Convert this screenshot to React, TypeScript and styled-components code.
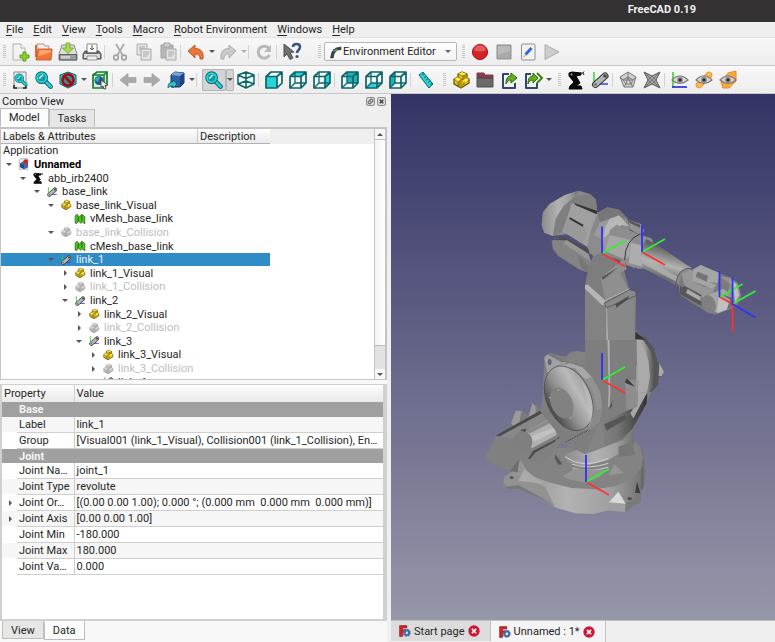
import React, { useState } from "react";
import styled, { createGlobalStyle, css } from "styled-components";

const GlobalStyle = createGlobalStyle`
  *, *::before, *::after { box-sizing: border-box; }
  html, body { margin: 0; padding: 0; }
  body, button, select {
    font-family: Roboto, "Noto Sans", sans-serif;
    font-size: 11px;
    line-height: 13px;
    color: #262626;
  }
  button { background: none; border: 0; padding: 0; margin: 0; }
  svg { display: block; }
`;

/* ---------- frame ---------- */

const Window = styled.div`
  display: flex;
  flex-direction: column;
  height: 100vh;
  min-height: 480px;
  overflow: hidden;
  background: #efefef;
`;

const TitleBar = styled.header`
  display: flex;
  align-items: center;
  justify-content: flex-end;
  height: 22px;
  flex: none;
  padding: 0 79px 3px 0;
  background: #333132;
  color: #f2f2f2;
  font-weight: 700;
`;

const MenuBar = styled.nav`
  display: flex;
  align-items: center;
  height: 16px;
  flex: none;
  gap: 10px;
  padding: 0 6px;
  border-bottom: 1px solid #e2e2e2;
`;

const MenuItem = styled.button`
  white-space: nowrap;
  u { text-underline-offset: 2px; }
`;

/* ---------- toolbars ---------- */

const Toolbar = styled.div`
  display: flex;
  align-items: center;
  height: 28px;
  flex: none;
  background: linear-gradient(#f8f8f8, #ededed);
  border-bottom: 1px solid #c9c9c9;
`;

const Grip = styled.span<{ $first?: boolean }>`
  display: flex;
  justify-content: center;
  width: ${(p) => (p.$first ? 8 : 11)}px;
  flex: none;
  &::before {
    content: "";
    width: 4px;
    height: 13px;
    background: repeating-linear-gradient(#c6c6c6 0 1px, transparent 1px 2px);
    border-left: 1px solid transparent;
    background-clip: padding-box;
  }
`;

const Separator = styled.span`
  width: 4px;
  height: 14px;
  flex: none;
  border-left: 1px solid #d2d2d2;
`;

const Spacer = styled.span`
  width: 9px;
  flex: none;
`;

const ToolButton = styled.button<{ $pressed?: boolean }>`
  display: flex;
  align-items: center;
  justify-content: center;
  width: 24px;
  height: 24px;
  flex: none;
  border-radius: 2px;
  ${(p) =>
    p.$pressed &&
    css`
      margin-left: 2px;
      height: 22px;
      background: #d4d4d4;
      box-shadow: inset 0 0 0 1px #b4b4b4;
    `}
`;

const DropButton = styled.button<{ $pressed?: boolean; $dim?: boolean }>`
  display: flex;
  align-items: center;
  justify-content: center;
  width: 8px;
  height: 22px;
  flex: none;
  border-radius: 2px;
  opacity: ${(p) => (p.$dim ? 0.4 : 1)};
  ${(p) =>
    p.$pressed &&
    css`
      background: #d4d4d4;
      box-shadow: inset 0 0 0 1px #b4b4b4;
    `}
  &::after {
    content: "";
    border: 3px solid transparent;
    border-top-color: #555;
    border-bottom: 0;
  }
`;

const Workbench = styled.label`
  display: flex;
  align-items: center;
  gap: 1px;
  width: 133px;
  height: 19px;
  flex: none;
  padding: 0 5px 0 3px;
  border: 1px solid #b5b5b5;
  border-radius: 2px;
  background: linear-gradient(#ffffff, #f3f3f3);
  &::after {
    content: "";
    border: 3px solid transparent;
    border-top-color: #666;
    border-bottom: 0;
  }
  select {
    flex: 1;
    min-width: 0;
    appearance: none;
    border: 0;
    padding: 0;
    background: none;
    outline: 0;
  }
`;

/* ---------- icons ---------- */

const Icon = ({ size = 20, children }: { size?: number; children: React.ReactNode }) => (
  <svg width={size} height={size} viewBox="0 0 20 20" aria-hidden="true">
    {children}
  </svg>
);

const TEAL = "#0f6468";
const CYAN = "#27d3d9";

const Magnifier = ({ small }: { small?: boolean }) => (
  <g transform={small ? "translate(4 3) scale(.7)" : "translate(.5 .5) scale(.95)"}>
    <path d="M11 11l6 6" stroke={TEAL} strokeWidth="4.800" strokeLinecap="round" />
    <path d="M11 11l6 6" stroke={CYAN} strokeWidth="2.800" strokeLinecap="round" />
    <circle cx="7.500" cy="7.500" r="4.800" fill="#19b4bb" stroke={TEAL} strokeWidth="3.800" />
    <circle cx="7.500" cy="7.500" r="4.800" fill="#13989f" stroke={CYAN} strokeWidth="1.900" />
    <path d="M5 8.500l4-4" stroke="#c9f7f8" strokeWidth="1.600" />
  </g>
);

const cubeFaces: Record<string, string> = {
  front: "2,6.5 13,6.5 13,18 2,18",
  top: "2,6.5 7,2 18,2 13,6.5",
  right: "13,6.5 18,2 18,13 13,18",
  rear: "7,2 18,2 18,13 7,13",
  bottom: "2,18 7,13 18,13 13,18",
  left: "2,6.5 7,2 7,13 2,18",
};

const CubeView = ({ face }: { face: string }) => (
  <Icon>
    <path d="M2 6.500L7 2h11v11l-5 5H2z" fill="#f1f8f8" />
    <polygon points={cubeFaces[face]} fill={face === "rear" || face === "left" ? "#1cb3b9" : CYAN} />
    {face !== "front" && <path d="M7 2v11M7 13h11M7 13l-5 5" stroke={TEAL} strokeWidth="1.300" fill="none" />}
    <path
      d="M2 6.500h11V18H2zM2 6.500L7 2h11l-5 4.500M18 2v11l-5 5"
      stroke={TEAL}
      strokeWidth="1.700"
      strokeLinejoin="round"
      fill="none"
    />
  </Icon>
);

const IsoCube = () => (
  <Icon>
    <path
      d="M10 2l8 3v9l-8 4-8-4V5zM2 5l8 3.500L18 5M10 8.500V18M10 2v9M2 14l8-3 8 3"
      fill="#e8f6f6"
      stroke={TEAL}
      strokeWidth="1.500"
      strokeLinejoin="round"
    />
  </Icon>
);

const ArrowIcon = ({ flip }: { flip?: boolean }) => (
  <Icon>
    <path
      d="M2 10l8-6.500v4h8v5h-8v4z"
      fill="#a9a9a9"
      stroke="#9a9a9a"
      strokeWidth=".6"
      transform={flip ? "rotate(180 10 10)" : undefined}
    />
  </Icon>
);

const CurvedArrow = ({ redo }: { redo?: boolean }) => (
  <Icon>
    <path
      d="M2 9l7-6v3.500c6 0 9 3.500 8 10.500h-3c0-4-2-5-5-5v4z"
      fill={redo ? "#c9c9c9" : "#e8773c"}
      stroke={redo ? "#a8a8a8" : "#b9501c"}
      strokeWidth=".9"
      strokeLinejoin="round"
      transform={redo ? "matrix(-1 0 0 1 20 0)" : undefined}
    />
  </Icon>
);

const PartIcon = ({ size = 20, dim }: { size?: number; dim?: boolean }) => {
  const [light, mid, dark, line] = dim
    ? ["#dcdcdc", "#c2c2c2", "#a9a9a9", "#9b9b9b"]
    : ["#ffe94d", "#dfc022", "#a88a0b", "#5f4d06"];
  return (
    <Icon size={size}>
      <path d="M3 9l4-2V4l4-2 5 2v4l2 1v4l-8 5-7-4z" fill={mid} stroke={line} strokeWidth="1.200" strokeLinejoin="round" />
      <path d="M3 9l4-2 4 2-4 3zM7 4l4-2 5 2-4 2zM12 10l3-2 3 1-4 3z" fill={light} />
      <path d="M7 12l4-3v5l3-2v3l-4 3-3-2zM12 6l4-2v4l-4 2z" fill={dark} opacity=".75" />
      <path d="M3 9l4 3 4-3M7 12v5M7 4l5 2v4l-5-3M12 6l4-2" fill="none" stroke={line} strokeWidth=".6" />
    </Icon>
  );
};

const RobotIcon = ({ size = 20 }: { size?: number }) => (
  <Icon size={size}>
    <path d="M3 3l3-1 9 1v2l-5 1 4 7-4 3h5l1 3H3l1-3 4-4-5-6z" fill="#080808" stroke="#000" strokeLinejoin="round" />
    <path d="M14 3h3l1-1.500M17 3l1 2" stroke="#222" fill="none" />
    <circle cx="5.500" cy="4.500" r="1" fill="#aaa" />
  </Icon>
);

const LinkIcon = ({ size = 20 }: { size?: number }) => (
  <Icon size={size}>
    <path d="M4 2v12" stroke="#35d72f" strokeWidth="1.500" />
    <path d="M4 14h14" stroke="#4040e8" strokeWidth="1.500" />
    <path d="M5.500 14.500L15 6" stroke="#333" strokeWidth="7" strokeLinecap="round" />
    <path d="M5.500 14.500L15 6" stroke="#b5b5b5" strokeWidth="5" strokeLinecap="round" />
    <circle cx="5.500" cy="14.500" r="1.300" fill="#666" />
    <circle cx="15" cy="6" r="1.700" fill="#444" />
  </Icon>
);

const MeshIcon = () => (
  <Icon size={12}>
    <path
      d="M2 5l3-3 4 5 4-5 5 4v12l-4-3-3 2-4-4-2 4H2z"
      fill="#55c422"
      stroke="#236b08"
      strokeWidth="1.300"
      strokeLinejoin="round"
    />
    <path d="M7 6v8M13 4v9" stroke="#1c5a07" strokeWidth="1.600" />
  </Icon>
);

const DocumentIcon = () => (
  <Icon size={12}>
    <path d="M4 1h12v18H2V4z" fill="#e7e7e7" stroke="#a5a5a5" />
    <path d="M4 9l6-3 6 3v6l-6 3-6-3z" fill="#3c6cab" stroke="#1d3c69" />
    <path d="M4 9l6 3v6l-6-3z" fill="#264a7c" />
    <circle cx="13" cy="6" r="4" fill="#d81f28" />
  </Icon>
);

const AppIcon = () => (
  <Icon size={12}>
    <path d="M1 1h12v4H6v3h5v4H6v7H1z" fill="#d2232a" stroke="#89141a" />
    <circle cx="13" cy="13" r="4" fill="none" stroke="#466ca5" strokeWidth="3.500" />
    <circle cx="13" cy="13" r="5.600" fill="none" stroke="#466ca5" strokeWidth="2" strokeDasharray="2.200 2.200" />
  </Icon>
);

const EyeShape = () => (
  <>
    <path d="M2 10q8-8 16 0q-8 7-16 0z" fill="#d9d9d9" fillOpacity=".85" stroke="#777" strokeWidth="1.100" />
    <circle cx="10" cy="10" r="3" fill="#8e8e8e" />
    <circle cx="10" cy="10" r="1.400" fill="#222" />
  </>
);

const CloseBadge = () => (
  <Icon size={12}>
    <circle cx="10" cy="10" r="9.500" fill="#cb1836" />
    <path d="M6.500 6.500l7 7M13.500 6.500l-7 7" stroke="#fff" strokeWidth="2.600" />
  </Icon>
);

const icons = {
  new: (
    <Icon>
      <path d="M3 2h8l4 4v12H3z" fill="#f1f1ee" stroke="#b4b4b0" />
      <path d="M11 2v4h4" fill="#fff" stroke="#b4b4b0" />
      <path d="M13 10h3v3h3v3h-3v3h-3v-3h-3v-3h3z" fill="#8cd41d" stroke="#508b0b" strokeWidth=".8" />
    </Icon>
  ),
  open: (
    <Icon>
      <path d="M3 2h7l1 2h4v9H3z" fill="#ededed" stroke="#b69384" />
      <path d="M1 3h2v12H1z" fill="#de6938" />
      <path d="M4 7h14v1l-1 10H2z" fill="#ee7437" stroke="#c65220" strokeWidth=".8" />
      <path d="M5 8h12l-.4 3C11 11 9 14 4 14z" fill="#ffa26c" />
    </Icon>
  ),
  save: (
    <Icon>
      <path d="M4 3h12l3 9v6H1v-6z" fill="#dededc" stroke="#8b8b8b" />
      <path d="M1.500 12.500h17V18h-17z" fill="#9c9e9c" stroke="#616161" />
      <path d="M3 14h9v2.500H3z" fill="#d0d0d0" />
      <path d="M8 1h4v5h3.500L10 11.500 4.500 6H8z" fill="#a5dc48" stroke="#6ea324" strokeWidth=".8" />
    </Icon>
  ),
  print: (
    <Icon>
      <path d="M5 2h10v9H5z" fill="#fafafa" stroke="#888" />
      <path d="M10 3v5M8 6l2 2 2-2" stroke="#555" fill="none" />
      <path d="M3 9h2v2h10V9h2l2 3v5H1v-5z" fill="#767676" stroke="#505050" />
      <path d="M2 12h16v4H2z" fill="#dcdcdc" />
      <path d="M5 14h10v4H5z" fill="#efefef" stroke="#777" strokeWidth=".7" />
    </Icon>
  ),
  cut: (
    <Icon>
      <path d="M6 2l7 12M14 2L7 14" stroke="#b0b0b0" strokeWidth="2" />
      <circle cx="6" cy="15.500" r="2.300" fill="none" stroke="#a4a4a4" strokeWidth="1.700" />
      <circle cx="14" cy="15.500" r="2.300" fill="none" stroke="#a4a4a4" strokeWidth="1.700" />
    </Icon>
  ),
  copy: (
    <Icon>
      <path d="M3 2h10v11H3z" fill="#e3e3e3" stroke="#b0b0b0" />
      <path d="M5 5h6M5 7h6" stroke="#aaa" />
      <path d="M7 7h10v11H7z" fill="#e3e3e3" stroke="#a9a9a9" />
      <path d="M9 10h6M9 12h6M9 14h4" stroke="#aaa" />
    </Icon>
  ),
  paste: (
    <Icon>
      <path d="M3 3h12v13H3z" fill="#b7b7b7" stroke="#a0a0a0" />
      <path d="M6 1h6v4H6z" fill="#cecece" stroke="#a4a4a4" />
      <path d="M8 7h10v11H8z" fill="#e1e1e1" stroke="#aaa" />
      <path d="M10 10h6M10 12h6M10 14h4" stroke="#aaa" />
    </Icon>
  ),
  undo: <CurvedArrow />,
  redo: <CurvedArrow redo />,
  refresh: (
    <Icon>
      <path d="M15 6.500A6 6 0 1 0 15.500 13" stroke="#b8b8b8" strokeWidth="3" fill="none" />
      <path d="M17 3v7h-7z" fill="#b8b8b8" />
    </Icon>
  ),
  whatsThis: (
    <Icon>
      <path d="M2 2l10 8-4 .5 3 5.500-3 1.500-3-5.500-3 3z" fill="#6d716f" stroke="#4d504f" />
      <path d="M11 5c0-4 7-4 7 0 0 3-3 3-3 6" fill="none" stroke="#35557f" strokeWidth="2.500" />
      <circle cx="15" cy="14.500" r="1.600" fill="#35557f" />
    </Icon>
  ),
  record: (
    <Icon>
      <circle cx="10" cy="10" r="7.600" fill="#d3232a" stroke="#a8181e" />
      <path d="M4 8a6.200 6.200 0 0 1 12 0q-6 3-12 0z" fill="#ea6d68" opacity=".8" />
    </Icon>
  ),
  stop: (
    <Icon>
      <path d="M3 3h14v14H3z" fill="#a9a9a9" stroke="#8d8d8d" />
      <path d="M4 4h12v5L4 13z" fill="#bababa" />
    </Icon>
  ),
  edit: (
    <Icon>
      <rect x="3.500" y="2" width="13.500" height="16" rx="1" fill="#f2f2f2" stroke="#8e8e8e" />
      <path d="M7.500 12.500l6-6.500" stroke="#3268de" strokeWidth="3" />
      <path d="M5.500 15l2-2" stroke="#e9b063" strokeWidth="1.600" />
    </Icon>
  ),
  play: (
    <Icon>
      <path d="M3 2.500l14 7.500-14 7.500z" fill="#cdcdcd" stroke="#a1a1a1" strokeWidth=".8" />
    </Icon>
  ),
  fitAll: (
    <Icon>
      <path d="M4 2h12v16H4z" fill="#f1f1f1" stroke="#888" />
      <path d="M4 15v3h3M16 15v3h-3" stroke="#222" strokeWidth="1.500" fill="none" />
      <Magnifier small />
    </Icon>
  ),
  fitSelection: (
    <Icon>
      <Magnifier />
    </Icon>
  ),
  drawStyle: (
    <Icon>
      <path d="M10 2l8 3v9l-8 4-8-4V5z" fill={CYAN} stroke={TEAL} />
      <circle cx="10" cy="10" r="5.600" fill="#3a8f93" stroke="#a10e12" strokeWidth="2.600" />
      <path d="M6 6l8 8" stroke="#a10e12" strokeWidth="2.600" />
    </Icon>
  ),
  bounding: (
    <Icon>
      <path d="M3 5l4-3h10v12l-3 4H3z" fill="#d5ead7" stroke="#15802a" strokeWidth="1.700" />
      <path d="M3 5h11v13M14 5l3-3" stroke="#15802a" strokeWidth="1.500" fill="none" />
      <circle cx="9" cy="10.500" r="4.500" fill="#2c5796" />
      <path d="M5 10a4 4 0 0 1 5-3l-2 5z" fill="#2fb3b6" />
      <path d="M11 10l7 5-3 .5 1 3-2 .5-1-3-2 1z" fill="#eee" stroke="#333" strokeWidth=".8" />
    </Icon>
  ),
  back: <ArrowIcon />,
  forward: <ArrowIcon flip />,
  linked: (
    <Icon>
      <path d="M5 5l4-3 9 1v10l-4 4H5z" fill="#2f5fa4" stroke="#173562" />
      <path d="M5 5l4-3 9 1-4 3z" fill="#7ba4d9" />
      <path d="M14 6l4-3v10l-4 4z" fill="#1f4680" />
      <path d="M2 18c0-4 1-6 5-6v-2l4 4-4 4v-2c-2 0-3 0-5 2z" fill="#35bec4" stroke={TEAL} strokeWidth=".8" />
    </Icon>
  ),
  ruler: (
    <Icon>
      <path d="M3 5l4-3 10 12-4 4z" fill={CYAN} stroke={TEAL} />
      <path d="M8 4l-2 1M10 6.500L8 8M12 9l-2 1M14 11l-2 1.500M16 13.500l-2 1" stroke={TEAL} />
    </Icon>
  ),
  group: (
    <Icon>
      <path d="M2 3h7l1 2h8v12H2z" fill="#6b6b6b" stroke="#505050" />
      <path d="M2 3h7l1 2h8v3H2z" fill="#8d3b4a" />
      <path d="M2 8h16" stroke="#504045" />
    </Icon>
  ),
  exportOne: (
    <Icon>
      <path d="M10 4H4v14h12v-5" fill="none" stroke="#2e4a68" strokeWidth="2" strokeLinejoin="round" />
      <path d="M7 14c0-6 2-8 5-8V3l6 5-6 5v-3c-2 0-4 1-5 4z" fill="#63b222" stroke="#2e6a08" />
    </Icon>
  ),
  exportMany: (
    <Icon>
      <path d="M8 4H3v14h11v-5" fill="none" stroke="#2e4a68" strokeWidth="2" strokeLinejoin="round" />
      <path d="M14 3l5 5-5 5" fill="none" stroke="#3e8211" strokeWidth="2" />
      <path d="M5 14c0-6 2-8 5-8V3l5 5-5 5v-3c-2 0-4 1-5 4z" fill="#63b222" stroke="#2e6a08" />
    </Icon>
  ),
  pentagon: (
    <Icon>
      <path
        d="M10 2l8 5-3 10H6L2 7zM10 2v5l5 3-2 4H8l-3-4 5-3M2 7l3 3M18 7l-3 3M6 17l2-3M15 17l-2-3M10 7l3 7M10 7L8 14M5 10h10"
        fill="#cfcfcf"
        stroke="#7c7c7c"
        strokeLinejoin="round"
      />
    </Icon>
  ),
  star: (
    <Icon>
      <path d="M2 2l8 4 8-4-4 8 4 8-8-4-8 4 4-8z" fill="#a8a8a8" stroke="#555" strokeLinejoin="round" />
      <path d="M2 2l16 16M18 2L2 18M10 6l4 4-4 4-4-4z" fill="none" stroke="#666" strokeWidth=".8" />
    </Icon>
  ),
  eyeAxes: (
    <Icon>
      <path d="M3 2v15" stroke="#35d72f" strokeWidth="1.600" />
      <path d="M2 17h15" stroke="#2222e0" strokeWidth="1.600" />
      <EyeShape />
    </Icon>
  ),
  eyeLink: (
    <Icon>
      <path d="M5 15L15 5" stroke="#d98a24" strokeWidth="6.500" strokeLinecap="round" />
      <path d="M5 15L15 5" stroke="#ffb84e" strokeWidth="5" strokeLinecap="round" />
      <EyeShape />
    </Icon>
  ),
  eyeFace: (
    <Icon>
      <path d="M18 1v10l-7 7H5l-2-6 7-9z" fill="#fba83c" stroke="#de8d27" />
      <EyeShape />
    </Icon>
  ),
};

type IconName = keyof typeof icons;
const Tool = ({ name, label }: { name: IconName; label: string }) => (
  <ToolButton aria-label={label} title={label}>
    {icons[name]}
  </ToolButton>
);

/* ---------- combo view ---------- */

const Main = styled.main`
  display: flex;
  flex: 1;
  min-height: 0;
`;

const Dock = styled.section`
  display: flex;
  flex-direction: column;
  flex: 0 0 387px;
  min-height: 0;
`;

const DockTitle = styled.div`
  display: flex;
  align-items: center;
  gap: 2px;
  height: 14px;
  flex: none;
  padding: 0 1px 0 2px;
  span { flex: 1; }
`;

const TabRow = styled.div<{ $below?: boolean }>`
  display: flex;
  align-items: flex-end;
  flex: none;
  height: ${(p) => (p.$below ? 21 : 19)}px;
  padding-left: ${(p) => (p.$below ? 2 : 0)}px;
  ${(p) => p.$below && "align-items: flex-start; background: #f8f8f8;"}
`;

const Tab = styled.button<{ $active: boolean; $below?: boolean }>`
  height: ${(p) => (p.$active ? 19 : 18)}px;
  padding: 0 8px;
  border: 1px solid #bdbdbd;
  border-top-color: ${(p) => (p.$below ? "transparent" : "#bdbdbd")};
  border-bottom-color: ${(p) => (p.$below ? "#bdbdbd" : "transparent")};
  background: ${(p) => (p.$active ? "#fcfcfc" : "#e6e6e6")};
`;

const TreeFrame = styled.div`
  display: flex;
  flex: 0 0 253px;
  min-height: 0;
  border: 1px solid #c4c4c4;
  border-top-width: 2px;
  border-right-width: 2px;
  background: #fff;
`;

const TreeContent = styled.div`
  flex: 1;
  min-width: 0;
  overflow: hidden;
`;

const TreeHeader = styled.div`
  display: flex;
  height: 15px;
  background: #efefef;
  span {
    padding: 1px 0 0 2px;
    background: linear-gradient(#fdfdfd, #eaeaea);
    border-bottom: 1px solid #b2b2b2;
  }
  span:first-child { width: 196px; }
  span:last-child { width: 73px; border-left: 1px solid #c8c8c8; }
`;

const TreeList = styled.ul`
  display: grid;
  grid-auto-rows: 1fr;
  height: 245px;
  width: 269px;
  margin: 0;
  padding: 0;
  list-style: none;
`;

const TreeItem = styled.li<{ $level: number; $selected?: boolean; $muted?: boolean; $strong?: boolean }>`
  display: flex;
  align-items: center;
  min-height: 0;
  padding-left: ${(p) => (p.$level < 0 ? 2 : 2 + p.$level * 14)}px;
  white-space: nowrap;
  font-weight: ${(p) => (p.$strong ? 700 : 400)};
  color: ${(p) => (p.$selected ? "#e8f3fb" : p.$muted ? "#bdbdbd" : p.$strong ? "#000" : "#262626")};
  background: ${(p) => (p.$selected ? "#308cc6" : "transparent")};
  svg { margin: 0 4px 0 3px; flex: none; }
`;

const Toggle = styled.button<{ $state: "open" | "closed" | "none" }>`
  display: flex;
  align-items: center;
  justify-content: center;
  width: 12px;
  height: 10px;
  flex: none;
  visibility: ${(p) => (p.$state === "none" ? "hidden" : "visible")};
  &::after {
    content: "";
    border: 3px solid transparent;
    ${(p) =>
      p.$state === "open"
        ? "border-top-color: #555; border-bottom: 0;"
        : "border-left-color: #555; border-right: 0;"}
  }
`;

const ScrollBar = styled.div`
  display: flex;
  flex-direction: column;
  width: 11px;
  flex: none;
  border-left: 1px solid #c4c4c4;
  background: #e2e2e2;
`;

const ScrollButton = styled.button<{ $up?: boolean }>`
  display: flex;
  align-items: center;
  justify-content: center;
  height: 10px;
  background: #f7f7f7;
  &::after {
    content: "";
    border: 3px solid transparent;
    ${(p) =>
      p.$up ? "border-bottom-color: #555; border-top: 0;" : "border-top-color: #555; border-bottom: 0;"}
  }
`;

const ScrollTrack = styled.div`
  flex: 1;
  div {
    height: 90%;
    border: solid #bcbcbc;
    border-width: 1px 0;
    background: linear-gradient(90deg, #f3f3f3, #fff);
  }
`;

const Splitter = styled.div`
  height: 4px;
  flex: none;
  background: #f8f8f8;
`;

const PropertyFrame = styled.div`
  flex: 1;
  min-height: 0;
  overflow: hidden;
  border: solid #d0d0d0;
  border-width: 1px 4px 2px 2px;
  background: #fff;
`;

const PropertyTable = styled.table`
  width: 100%;
  height: 190px;
  table-layout: fixed;
  border-collapse: collapse;
  col:nth-child(1) { width: 15px; }
  col:nth-child(2) { width: 57px; }
  thead tr { height: 17px; }
  thead { background: linear-gradient(#fdfdfd, #e9e9e9); }
  th, td {
    padding: 0 2px;
    text-align: left;
    white-space: nowrap;
    overflow: hidden;
    text-overflow: ellipsis;
    font-weight: 400;
  }
  tbody td { border-bottom: 1px solid #cfcfcf; }
  tbody td:first-child { border-bottom-color: transparent; padding: 0 2px; }
  td:last-child, th:last-child { border-left: 1px solid #cfcfcf; }
`;

const PropertyRow = styled.tr<{ $shaded?: boolean }>`
  background: ${(p) => (p.$shaded ? "#f6f6f6" : "#fff")};
`;

const CategoryRow = styled.tr`
  background: #a0a0a0;
  th {
    padding-left: 17px;
    color: #f4f4f4;
    font-weight: 700;
  }
  && th:last-child { border-left: 0; }
`;

const DockHandle = styled.div`
  width: 4px;
  flex: none;
  background: #efefef;
`;

/* ---------- document area ---------- */

const Documents = styled.section`
  display: flex;
  flex-direction: column;
  flex: 1;
  min-width: 0;
`;

const Viewport = styled.div`
  flex: 1;
  min-height: 0;
  background: linear-gradient(#333366, #9797aa);
  svg { width: 100%; height: 100%; }
`;

const DocTabs = styled.div`
  display: flex;
  height: 22px;
  flex: none;
  border-top: 1px solid #c2c2c2;
`;

const DocTab = styled.div<{ $active?: boolean }>`
  display: flex;
  align-items: center;
  height: ${(p) => (p.$active ? 21 : 20)}px;
  padding: 0 10px 0 8px;
  gap: 3px;
  background: ${(p) => (p.$active ? "#f4f4f4" : "#dcdcdc")};
  border-right: 1px solid #c2c2c2;
  button { white-space: nowrap; }
`;

/* ---------- 3D scene ---------- */

const Axes = ({ x, y }: { x: number; y: number }) => (
  <g strokeWidth="1.800" fill="none">
    <path d={`M${x} ${y}l23 13`} stroke="#ff3030" />
    <path d={`M${x} ${y}l23 -13`} stroke="#30f030" />
    <path d={`M${x} ${y}v-27`} stroke="#3030ff" />
  </g>
);

const Scene = () => (
  <svg viewBox="391 94 384 526" role="img" aria-label="ABB IRB 2400 robot model">
    <defs>
      <linearGradient id="drum">
        <stop offset="0" stopColor="#8a8a8a" />
        <stop offset=".45" stopColor="#b2b2b2" />
        <stop offset=".75" stopColor="#a0a0a0" />
        <stop offset="1" stopColor="#707070" />
      </linearGradient>
      <linearGradient id="disk" x1="0" y1=".4" x2="1" y2=".2">
        <stop offset="0" stopColor="#4d4d4d" />
        <stop offset=".35" stopColor="#909090" />
        <stop offset=".7" stopColor="#bababa" />
        <stop offset="1" stopColor="#9c9c9c" />
      </linearGradient>
      <linearGradient id="rearDisk" x1="0" y1="0" x2="1" y2="0">
        <stop offset="0" stopColor="#bcbcbc" />
        <stop offset=".5" stopColor="#989898" />
        <stop offset="1" stopColor="#4f4f4f" />
      </linearGradient>
      <linearGradient id="tube" x1=".65" y1="0" x2=".35" y2="1">
        <stop offset=".15" stopColor="#555" />
        <stop offset=".36" stopColor="#858585" />
        <stop offset=".55" stopColor="#b4b4b4" />
        <stop offset=".8" stopColor="#6f6f6f" />
      </linearGradient>
      <linearGradient id="skirt">
        <stop offset="0" stopColor="#8b8b8b" />
        <stop offset=".5" stopColor="#777" />
        <stop offset="1" stopColor="#333" />
      </linearGradient>
    </defs>

    {/* base, turntable and balancing disks */}
    <g transform="translate(475 330) scale(.33333)">
      <path d="M483 12L510 22 537 55 549 100 567 125 560 138 551 140 549 165 527 188 505 192 483 190Z" fill="#555" />
      <path d="M483 14L500 24 528 65 540 120 534 170 522 188 480 200Z" fill="url(#rearDisk)" />
      <path d="M483 20L505 50 520 90 525 140 516 185 483 200Z" fill="#aaa" />
      <path d="M553 100L567 125 560 138 551 138Z" fill="#a8a8a8" />

      <path d="M130 382L500 355 510 400 508 468 497 480 497 515 450 546 400 541 355 552 300 550 240 532 200 507 130 477 95 476 85 465 88 440 112 427Z" fill="url(#drum)" />
      <path d="M88 440L112 425 130 436 210 470 240 532 200 507 130 465 95 470 86 460Z" fill="#929292" />
      <path d="M86 460L94 470 130 465 200 503 240 530 200 507 130 477 95 476Z" fill="#777" />
      <path d="M130 382L175 360 300 350 470 325 495 350 504 380 498 415 470 447 420 469 360 478 290 474 220 457 165 435Z" fill="#838383" />
      <path d="M148 417L205 462 130 452Z" fill="#aaa" />
      <ellipse cx="110" cy="443" rx="6" ry="4" fill="#555" />
      <path d="M430 485L452 521 450 546 400 541 405 517Z" fill="#a0a0a0" />
      <path d="M430 485L452 521 402 517Z" fill="#dadada" />
      <path d="M486 455L496 490 480 488Z" fill="#3e3e3e" />
      <path d="M453 520L497 498 497 515 450 546Z" fill="#7a7a7a" />
      <ellipse cx="464" cy="506" rx="6" ry="4" fill="#444" />
      <path d="M500 410L504 412 503 475 497 482Z" fill="#646464" />

      <path d="M108 280L122 243 140 242 160 261 172 220 195 240 196 265 130 310Z" fill="#9a9a9a" />
      <path d="M140 242L160 261 155 280 130 290ZM182 222L196 238 196 260 182 258Z" fill="#7b7b7b" />
      <path d="M30 385L62 317 195 242 240 250 270 330 200 400 130 385 128 426 105 423 34 394Z" fill="#808080" />
      <path d="M62 317L195 242 203 249 78 318Z" fill="#4a4a4a" />
      <path d="M76 318L205 248 230 265 130 330Z" fill="#888" />
      <path d="M130 330L134 383 128 426 105 423 134 384Z" fill="#6e6e6e" />
      <path d="M143 307L230 265 245 280 245 315 170 355Z" fill="#b1b1b1" />
      <path d="M143 307L230 266 236 274 165 310Z" fill="#8a8a8a" />
      <path d="M166 320L240 290 244 302 172 337Z" fill="#c1c1c1" />
      <ellipse cx="143" cy="335" rx="29" ry="31" fill="#7f7f7f" />
      <path d="M160 385L175 362 243 328 240 335 182 367 164 388Z" fill="#4c4c4c" />
      <path d="M135 300L155 296 150 306ZM205 252L225 249 230 257 210 256ZM243 330L267 300 260 320Z" fill="#494949" />

      <path d="M265 375L475 298 477 342 445 362 400 390 330 407 280 397Z" fill="url(#drum)" />
      <path d="M270 380Q325 420 400 385M290 402Q340 420 400 400M293 414Q345 428 400 412" fill="none" stroke="#d0d0d0" strokeWidth="3" />
      <path d="M265 437L300 415 390 420 375 440 330 458 280 448Z" fill="#949494" />
      <path d="M418 402L445 428 400 437Z" fill="#959595" />
      <path d="M430 350L470 335 480 375 432 380Z" fill="#777" />
      <path d="M240 372L262 403 250 404 240 385Z" fill="#575757" />

      <path d="M197 245L204 180 208 80 232 72 272 80 290 64 330 66 331 0 484 0 488 190 530 185 517 215 468 268 475 300 445 330 390 350 330 372 262 340 240 300Z" fill="#7e7e7e" />
      <path d="M378 275L475 235 517 190 515 220 472 297 440 328 390 345 330 372Z" fill="url(#skirt)" />
      <path d="M488 190L517 187 475 265 466 250 487 215Z" fill="#a7a7a7" />
      <path d="M450 158L478 147 490 150 487 232 455 240Z" fill="#8e8e8e" />
      <path d="M455 145L480 170 450 158Z" fill="#3d3d3d" />
      <path d="M387 283L450 255 454 266 395 302Z" fill="#565656" />
      <path d="M378 270L330 372 365 360 390 345Z" fill="#848484" />
      <path d="M270 337L350 295" stroke="#303030" strokeWidth="2" strokeDasharray="5 3" />
      <path d="M397 0h6l3 190-3 42-4-2 2-40z" fill="#b0b0b0" />
      <path d="M402 238L412 212 410 230Z" fill="#484848" />
      <path d="M484 0v105l5 3-1 70-4 8z" fill="#a2a2a2" />
      <path d="M275 82L286 69 310 63 330 70 330 105 285 95Z" fill="#828282" />

      <path d="M208 83L217 73 230 70 275 95 265 105 235 115 218 135Z" fill="#a0a0a0" />
      <path d="M217 73L230 70 276 95 260 97Z" fill="#777" />
      <ellipse cx="224" cy="96" rx="8" ry="11" fill="#62627e" stroke="#aaa" strokeWidth="3" />
      <path d="M245 106L285 100 322 112 350 140 375 185 382 235 375 275 350 298 315 303 282 285Z" fill="#898989" />
      <path d="M285 100L322 112 350 140 332 149 300 115 250 108Z" fill="#a8a8a8" />
      <path d="M350 140L375 185 382 235 365 240 355 190 332 149Z" fill="#929292" />
      <ellipse cx="281" cy="205" rx="66" ry="102" transform="rotate(-24 281 205)" fill="url(#disk)" stroke="#4a4a4a" strokeWidth="2" />
      <path d="M318 148Q375 225 341 292Q352 245 318 148Z" fill="#c2c2c2" opacity=".6" />
      <ellipse cx="260" cy="219" rx="32" ry="49" transform="rotate(-24 260 219)" fill="#818181" />
      <path d="M222 203h5M284 264h5M248 180h5" stroke="#b8b8b8" strokeWidth="3" />
    </g>

    {/* upper arm, forearm and wrist */}
    <g transform="translate(530 180) scale(.33333)">
      <path d="M165 318L185 325 225 378 300 340 318 345 315 480 165 480Z" fill="#828282" />
      <path d="M229 378L312 350 315 480 234 480Z" fill="#888" />
      <path d="M229 380v100h5l-3-98z" fill="#b0b0b0" />
      <path d="M316 455L345 480 316 478Z" fill="#333" />

      <path d="M35 135L39 97 59 72 105 45 146 32 180 42 197 58 202 96 230 104 220 210 180 190 115 162 68 168 43 158Z" fill="#8a8a8a" />
      <path d="M35 135L39 97 59 72 105 45 146 32 132 57 102 76 77 115 68 167 43 158Z" fill="url(#drum)" />
      <path d="M69 167L78 118 103 77 136 49 180 42 198 60 201 95 125 70 98 155Z" fill="#7f7f7f" />
      <path d="M125 70L205 100 174 202 97 154 112 112Z" fill="#a0a0a0" />
      <path d="M134 70L202 93 200 103 136 75ZM120 112L160 134 159 140 116 119Z" fill="#333" />
      <path d="M112 113L173 150 162 190 97 154Z" fill="#999" />

      <path d="M65 183L78 175 110 177 165 214 185 250 183 268 170 277 150 270 85 228 69 208Z" fill="#838383" />
      <path d="M66 180L100 171 178 210 183 225 110 181Z" fill="#4c4c4c" />
      <path d="M110 180L176 222 185 252 175 240 100 190Z" fill="#969696" />
      <path d="M145 224L182 265 175 276 155 271Z" fill="#777" />

      <path d="M175 265L188 230 232 220 278 257 300 335 225 372 165 318Z" fill="#7d7d7d" />
      <path d="M212 294L282 235 290 268 270 280 299 335 228 368Z" fill="#8f8f8f" />
      <path d="M215 292L265 262 218 300Z" fill="#555" />
      <path d="M165 315L174 314 225 360 225 376 215 374 165 326Z" fill="#b5b5b5" />
      <path d="M222 370L299 329 318 334 318 347 231 383Z" fill="#898989" stroke="#454545" strokeWidth="2" />
      <path d="M256 372L297 348 293 358 259 383Z" fill="#4b4b4b" />
      <path d="M225 362L299 326" stroke="#bdbdbd" strokeWidth="2" />

      <path d="M172 201L182 154 202 99 232 82 267 89 292 115 300 147 280 170 285 225 278 244 220 222 190 230Z" fill="#888" />
      <path d="M202 99L232 82 267 89 292 115 265 112 240 118 210 125Z" fill="#777" />
      <path d="M210 128L238 117 275 135 240 158 223 214 180 223 175 200 186 173Z" fill="#9a9a9a" />
      <path d="M238 117L267 106 297 139 275 135 240 158 220 175 225 145Z" fill="#b7b7b7" />
      <path d="M180 160L220 180 223 214 180 223 173 200Z" fill="#8c8c8c" />
      <path d="M295 120L333 132 343 153 330 165 300 148Z" fill="#929292" />
      <path d="M293 120L330 134 330 143 301 130Z" fill="#555" />

      <path d="M240 150L260 134 330 164 345 175 315 265 289 255 280 236 225 215Z" fill="#8d8d8d" />
      <path d="M238 165L325 185 292 235 280 236 225 213Z" fill="#a6a6a6" />
      <path d="M331 161Q285 180 284 240" fill="none" stroke="#363636" strokeWidth="3" />
      <path d="M303 185L333 165 364 175 374 195 345 265 325 267 295 250Z" fill="#8c8c8c" />
      <path d="M303 188L343 198 337 260 296 249Z" fill="#adadad" />
      <path d="M350 178L372 190 412 215 474 257 486 264 460 318 437 315 340 265Q320 215 350 178Z" fill="url(#tube)" />
      <path d="M338 230L445 292 440 306 333 248Z" fill="#b2b2b2" opacity=".8" />
      <path d="M484 265Q445 260 437 312L460 322 477 275Z" fill="#888" stroke="#444" strokeWidth="2" />

      <path d="M446 314L455 281 490 268 512 255 603 294 626 317 633 350 620 379 585 391 555 405 520 390 450 345Z" fill="#7b7b7b" />
      <path d="M455 282L480 268 500 280 487 303 526 322 560 312 545 346 518 354 463 317Z" fill="#979797" />
      <path d="M490 268L512 255 570 280 562 310 530 305 535 287 503 275 497 290 560 315 545 325 487 303Z" fill="#a5a5a5" />
      <path d="M503 276L532 290 530 305 497 290Z" fill="#747474" />
      <path d="M450 317L512 352 515 378 450 343ZM463 317L515 345 512 352 457 324Z" fill="#575757" />
      <path d="M473 327L512 350 512 363 468 339Z" fill="#aaa" />
      <path d="M542 342L580 326 610 350 601 386 565 400 520 382Z" fill="#a5a5a5" />
      <path d="M567 349L600 368 592 388 560 398Z" fill="#c0c0c0" />
      <ellipse cx="537" cy="373" rx="20" ry="28" transform="rotate(-20 537 373)" fill="#808080" />
      <path d="M570 290L598 292 623 309 632 344 617 370 592 342 600 312Z" fill="#919191" />
      <path d="M600 300L618 312 628 345 616 365 610 330Z" fill="#bdbdbd" />
      <path d="M570 340L606 353 606 380 590 390 600 360Z" fill="#6d6d6d" />
    </g>

    <Axes x={586} y={482} />
    <Axes x={602} y={380} />
    <Axes x={602} y={253.500} />
    <Axes x={642} y={252} />
    <path d="M719.500 297l13 7" stroke="#ff3030" strokeWidth="1.800" />
    <path d="M719.500 297l23-13" stroke="#30f030" strokeWidth="1.800" />
    <path d="M719.500 297v-26" stroke="#3030ff" strokeWidth="1.800" />
    <path d="M732.500 304v28" stroke="#ff3030" strokeWidth="1.800" />
    <path d="M732.500 304l23-13" stroke="#30f030" strokeWidth="1.800" />
    <path d="M732.500 278v26l23 13.500" stroke="#3030ff" strokeWidth="1.800" fill="none" />
  </svg>
);

/* ---------- data ---------- */

type Kind = "document" | "robot" | "link" | "part" | "mutedPart" | "mesh";
interface Node {
  level: number;
  kind: Kind;
  text: string;
  state: "open" | "closed" | "none";
}

const nodes: Node[] = [
  { level: 0, kind: "document", text: "Unnamed", state: "open" },
  { level: 1, kind: "robot", text: "abb_irb2400", state: "open" },
  { level: 2, kind: "link", text: "base_link", state: "open" },
  { level: 3, kind: "part", text: "base_link_Visual", state: "open" },
  { level: 4, kind: "mesh", text: "vMesh_base_link", state: "none" },
  { level: 3, kind: "mutedPart", text: "base_link_Collision", state: "open" },
  { level: 4, kind: "mesh", text: "cMesh_base_link", state: "none" },
  { level: 3, kind: "link", text: "link_1", state: "open" },
  { level: 4, kind: "part", text: "link_1_Visual", state: "closed" },
  { level: 4, kind: "mutedPart", text: "link_1_Collision", state: "closed" },
  { level: 4, kind: "link", text: "link_2", state: "open" },
  { level: 5, kind: "part", text: "link_2_Visual", state: "closed" },
  { level: 5, kind: "mutedPart", text: "link_2_Collision", state: "closed" },
  { level: 5, kind: "link", text: "link_3", state: "open" },
  { level: 6, kind: "part", text: "link_3_Visual", state: "closed" },
  { level: 6, kind: "mutedPart", text: "link_3_Collision", state: "closed" },
  { level: 6, kind: "link", text: "link_4", state: "open" },
];

const nodeIcons: Record<Kind, React.ReactNode> = {
  document: <DocumentIcon />,
  robot: <RobotIcon size={12} />,
  link: <LinkIcon size={12} />,
  part: <PartIcon size={12} />,
  mutedPart: <PartIcon size={12} dim />,
  mesh: <MeshIcon />,
};

interface Property {
  name: string;
  value: string;
  shaded?: boolean;
  expandable?: boolean;
}

const properties: { category: string; items: Property[] }[] = [
  {
    category: "Base",
    items: [
      { name: "Label", value: "link_1", shaded: true },
      {
        name: "Group",
        value: "[Visual001 (link_1_Visual), Collision001 (link_1_Collision), En…",
      },
    ],
  },
  {
    category: "Joint",
    items: [
      { name: "Joint Na…", value: "joint_1" },
      { name: "Joint Type", value: "revolute", shaded: true },
      {
        name: "Joint Or…",
        value: "[(0.00 0.00 1.00); 0.000 °; (0.000 mm\u00a0 0.000 mm\u00a0 0.000 mm)]",
        expandable: true,
      },
      { name: "Joint Axis", value: "[0.00 0.00 1.00]", shaded: true, expandable: true },
      { name: "Joint Min", value: "-180.000" },
      { name: "Joint Max", value: "180.000", shaded: true },
      { name: "Joint Va…", value: "0.000" },
    ],
  },
];

const menus = ["File", "Edit", "View", "Tools", "Macro", "Robot Environment", "Windows", "Help"];

export default function App() {
  const [topTab, setTopTab] = useState("Model");
  const [bottomTab, setBottomTab] = useState("Data");
  const [selected, setSelected] = useState("link_1");

  return (
    <Window>
      <GlobalStyle />
      <TitleBar>FreeCAD 0.19</TitleBar>
      <MenuBar>
        {menus.map((m) => (
          <MenuItem key={m}>
            <u>{m[0]}</u>
            {m.slice(1)}
          </MenuItem>
        ))}
      </MenuBar>

      <Toolbar role="toolbar" aria-label="File">
        <Grip $first />
        <Tool name="new" label="New" />
        <Tool name="open" label="Open" />
        <Tool name="save" label="Save" />
        <Tool name="print" label="Print" />
        <Separator />
        <Tool name="cut" label="Cut" />
        <Tool name="copy" label="Copy" />
        <Tool name="paste" label="Paste" />
        <Separator />
        <Tool name="undo" label="Undo" />
        <DropButton aria-label="Undo history" />
        <Tool name="redo" label="Redo" />
        <DropButton aria-label="Redo history" $dim />
        <Separator />
        <Tool name="refresh" label="Refresh" />
        <Separator />
        <Tool name="whatsThis" label="What's this?" />
        <Spacer />
        <Grip />
        <Workbench>
          <Icon size={14}>
            <path d="M3 19l2-9 6-6 8-2v5l-6 1-4 5-1 6z" fill="#3f3f3f" />
            <path d="M9 9l4-3" stroke="#3ed33a" strokeWidth="2" />
            <path d="M8 6v4" stroke="#4747e4" strokeWidth="2" />
          </Icon>
          <select aria-label="Workbench">
            <option>Environment Editor</option>
          </select>
        </Workbench>
        <Grip />
        <Tool name="record" label="Record macro" />
        <Tool name="stop" label="Stop macro" />
        <Tool name="edit" label="Macros" />
        <Tool name="play" label="Run macro" />
      </Toolbar>

      <Toolbar role="toolbar" aria-label="View">
        <Grip $first />
        <Tool name="fitAll" label="Fit all" />
        <Tool name="fitSelection" label="Fit selection" />
        <Tool name="drawStyle" label="Draw style" />
        <DropButton aria-label="Draw style options" />
        <Tool name="bounding" label="Bounding box" />
        <Separator />
        <Tool name="back" label="Back" />
        <Tool name="forward" label="Forward" />
        <Tool name="linked" label="Go to linked object" />
        <DropButton aria-label="Link options" />
        <Separator />
        <ToolButton $pressed aria-label="Sync view">
          {icons.fitSelection}
        </ToolButton>
        <DropButton $pressed aria-label="Sync view options" />
        <ToolButton aria-label="Isometric">
          <IsoCube />
        </ToolButton>
        <Separator />
        {["front", "top", "right"].map((f) => (
          <ToolButton key={f} aria-label={f}>
            <CubeView face={f} />
          </ToolButton>
        ))}
        <Separator />
        {["rear", "bottom", "left"].map((f) => (
          <ToolButton key={f} aria-label={f}>
            <CubeView face={f} />
          </ToolButton>
        ))}
        <Separator />
        <Tool name="ruler" label="Measure distance" />
        <Grip />
        <ToolButton aria-label="Create part">
          <PartIcon />
        </ToolButton>
        <Tool name="group" label="Create group" />
        <Tool name="exportOne" label="Make link" />
        <Tool name="exportMany" label="Link actions" />
        <DropButton aria-label="More link actions" />
        <Grip />
        <ToolButton aria-label="Create robot">
          <RobotIcon />
        </ToolButton>
        <ToolButton aria-label="Create link">
          <LinkIcon />
        </ToolButton>
        <Separator />
        <Tool name="pentagon" label="Convex hull" />
        <Tool name="star" label="Simplify mesh" />
        <Separator />
        <Tool name="eyeAxes" label="Show frames" />
        <Tool name="eyeLink" label="Show links" />
        <Tool name="eyeFace" label="Show collisions" />
      </Toolbar>

      <Main>
        <Dock>
          <DockTitle>
            <span>Combo View</span>
            <button aria-label="Float">
              <Icon size={9}>
                <rect x="1" y="1" width="18" height="18" rx="4" fill="#ddd" stroke="#777" strokeWidth="2" />
                <path d="M5 9h6v6H5zM9 8V5h6v6h-3" fill="none" stroke="#555" strokeWidth="2" />
              </Icon>
            </button>
            <button aria-label="Close">
              <Icon size={9}>
                <rect x="1" y="1" width="18" height="18" rx="4" fill="#ddd" stroke="#777" strokeWidth="2" />
                <path d="M6 6l8 8M14 6l-8 8" stroke="#444" strokeWidth="3.500" />
              </Icon>
            </button>
          </DockTitle>
          <TabRow>
            {["Model", "Tasks"].map((t) => (
              <Tab key={t} $active={t === topTab} onClick={() => setTopTab(t)}>
                {t}
              </Tab>
            ))}
          </TabRow>
          <TreeFrame>
            <TreeContent>
              <TreeHeader>
                <span>Labels &amp; Attributes</span>
                <span>Description</span>
              </TreeHeader>
              <TreeList role="tree">
                <TreeItem role="treeitem" $level={-1}>
                  Application
                </TreeItem>
                {nodes.map((n) => (
                  <TreeItem
                    key={n.text}
                    role="treeitem"
                    $level={n.level}
                    $selected={n.text === selected}
                    $muted={n.kind === "mutedPart"}
                    $strong={n.kind === "document"}
                    onClick={() => setSelected(n.text)}
                  >
                    <Toggle $state={n.state} aria-label={`Toggle ${n.text}`} />
                    {nodeIcons[n.kind]}
                    {n.text}
                  </TreeItem>
                ))}
              </TreeList>
            </TreeContent>
            <ScrollBar>
              <ScrollButton $up aria-label="Scroll up" />
              <ScrollTrack>
                <div />
              </ScrollTrack>
              <ScrollButton aria-label="Scroll down" />
            </ScrollBar>
          </TreeFrame>
          <Splitter />
          <PropertyFrame>
            <PropertyTable>
              <colgroup>
                <col />
                <col />
                <col />
              </colgroup>
              <thead>
                <tr>
                  <th colSpan={2}>Property</th>
                  <th>Value</th>
                </tr>
              </thead>
              <tbody>
                {properties.map((group) => (
                  <React.Fragment key={group.category}>
                    <CategoryRow>
                      <th colSpan={3}>{group.category}</th>
                    </CategoryRow>
                    {group.items.map((p) => (
                      <PropertyRow key={p.name} $shaded={p.shaded}>
                        <td>
                          {p.expandable && <Toggle $state="closed" aria-label={`Expand ${p.name}`} />}
                        </td>
                        <td>{p.name}</td>
                        <td>{p.value}</td>
                      </PropertyRow>
                    ))}
                  </React.Fragment>
                ))}
              </tbody>
            </PropertyTable>
          </PropertyFrame>
          <TabRow $below>
            {["View", "Data"].map((t) => (
              <Tab key={t} $below $active={t === bottomTab} onClick={() => setBottomTab(t)}>
                {t}
              </Tab>
            ))}
          </TabRow>
        </Dock>
        <DockHandle />
        <Documents>
          <Viewport>
            <Scene />
          </Viewport>
          <DocTabs>
            <DocTab>
              <AppIcon />
              <button>Start page</button>
              <button aria-label="Close Start page">
                <CloseBadge />
              </button>
            </DocTab>
            <DocTab $active>
              <AppIcon />
              <button>Unnamed : 1*</button>
              <button aria-label="Close Unnamed">
                <CloseBadge />
              </button>
            </DocTab>
          </DocTabs>
        </Documents>
      </Main>
    </Window>
  );
}
